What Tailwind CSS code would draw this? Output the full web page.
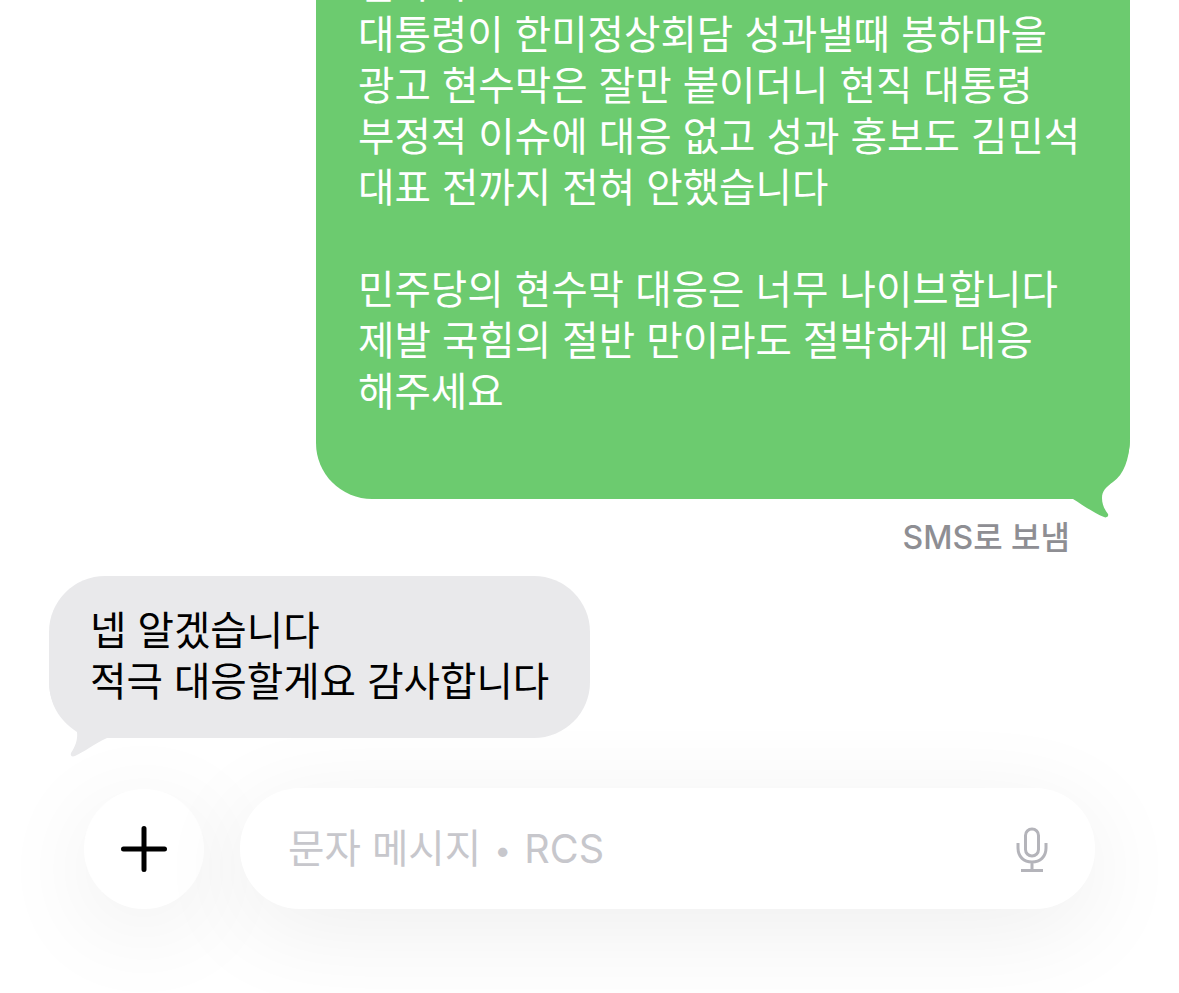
<!DOCTYPE html>
<html lang="ko">
<head>
  <meta charset="UTF-8">
  <title>메시지</title>
  <script src="https://cdn.jsdelivr.net/npm/@tailwindcss/browser@4"></script>
</head>
<body class="bg-white">
<div class="relative w-[1179px] h-[993px] overflow-hidden bg-white font-['Inter','Noto_Sans_CJK_KR',sans-serif]">

  <div class="relative flex flex-col">
    <!-- sent bubble -->
    <div class="relative self-end mr-[49px] mt-[-60px] w-[814px] h-[559px] bg-[#6ccb6f] rounded-[56px] rounded-br-[60px] pl-[42px] pt-[19px] text-white text-[39.6px] leading-[51px] whitespace-pre">결과적
대통령이 한미정상회담 성과낼때 봉하마을
광고 현수막은 잘만 붙이더니 현직 대통령
부정적 이슈에 대응 없고 성과 홍보도 김민석
대표 전까지 전혀 안했습니다

민주당의 현수막 대응은 너무 나이브합니다
제발 국힘의 절반 만이라도 절박하게 대응
해주세요<svg class="absolute left-[744px] top-[500px]" width="72" height="80" viewBox="1060 440 72 80"><path d="M1130 440 C1129 460 1124 474 1113 482 C1106 487 1102 491 1102 498 C1102 505 1105 510 1108 514 C1109 517 1106 518 1104 517 C1094 513 1084 506 1073 499 L1060 499 L1060 440 Z" fill="#6ccb6f"/></svg></div>

    <div class="self-end mr-[109px] mt-[21px] text-[#8e8e93] text-[32px] leading-[36px] font-medium">SMS로 보냄</div>

    <!-- received bubble -->
    <div class="relative self-start ml-[49px] mt-[20px] w-[541px] h-[162px] bg-[#e9e9eb] rounded-[56px] pl-[41px] pt-[30px] text-black text-[39.6px] leading-[51px]">
      <svg class="absolute left-[-4px] top-[104px]" width="80" height="80" viewBox="45 680 80 80"><path d="M49 680 C49 700 56 718 77 732 C78 740 75 747 71 753 C70 756 72 757 75 756 C84 752 94 744 107 738 L120 738 L120 680 Z" fill="#e9e9eb"/></svg>
      <p class="relative whitespace-pre">넵 알겠습니다
적극 대응할게요 감사합니다</p>
    </div>

    <!-- input row -->
    <div class="flex items-center gap-[36px] ml-[84px] mt-[50px] w-[1011px]">
      <div class="flex items-center justify-center w-[120px] h-[120px] shrink-0 rounded-full bg-white shadow-[0_20px_100px_rgba(0,0,0,0.07)]">
        <svg width="46" height="46" viewBox="0 0 46 46"><path d="M2.500 23 H43.500 M23 2.500 V43.500" stroke="#000" stroke-width="5" stroke-linecap="round" fill="none"/></svg>
      </div>
      <div class="flex items-center justify-between grow h-[121px] rounded-[60px] bg-white pl-[48px] pr-[47px] shadow-[0_20px_100px_rgba(0,0,0,0.07)]">
        <span class="pt-[3px] text-[#c7c7cc] text-[39.6px]">문자 메시지 <span class="mx-[2px] text-[30px] align-[2px]">•</span> RCS</span>
        <svg width="33" height="46" viewBox="1015 826 33 46" fill="none" stroke="#b4b4ba" stroke-width="3"><rect x="1025.500" y="829" width="13" height="27" rx="6.500"/><path d="M1018 843 V848 C1018 857 1024 862 1032 862 C1040 862 1046 857 1046 848 V843 M1032 862 V870 M1021 870.500 H1043"/></svg>
      </div>
    </div>
  </div>
</div>
</body>
</html>
